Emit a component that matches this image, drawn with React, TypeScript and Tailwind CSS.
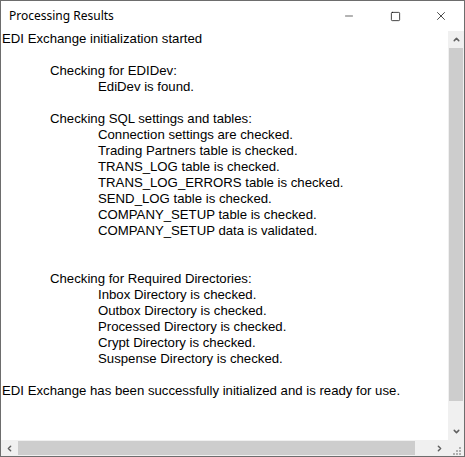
import { Minus, Square, X, ChevronUp, ChevronDown, ChevronLeft, ChevronRight } from 'lucide-react';

const lines: [number, string][] = [
  [0, 'EDI Exchange initialization started'],
  [0, ''],
  [1, 'Checking for EDIDev:'],
  [2, 'EdiDev is found.'],
  [0, ''],
  [1, 'Checking SQL settings and tables:'],
  [2, 'Connection settings are checked.'],
  [2, 'Trading Partners table is checked.'],
  [2, 'TRANS_LOG table is checked.'],
  [2, 'TRANS_LOG_ERRORS table is checked.'],
  [2, 'SEND_LOG table is checked.'],
  [2, 'COMPANY_SETUP table is checked.'],
  [2, 'COMPANY_SETUP data is validated.'],
  [0, ''],
  [0, ''],
  [1, 'Checking for Required Directories:'],
  [2, 'Inbox Directory is checked.'],
  [2, 'Outbox Directory is checked.'],
  [2, 'Processed Directory is checked.'],
  [2, 'Crypt Directory is checked.'],
  [2, 'Suspense Directory is checked.'],
  [0, ''],
  [0, 'EDI Exchange has been successfully initialized and is ready for use.'],
];

const indent = ['pl-[1px]', 'pl-[49px]', 'pl-[97px]'];

export default function App() {
  return (
    <div className="w-[465px] h-[457px] bg-white border border-[#6d6d6d] flex flex-col overflow-hidden">
      {/* Title bar */}
      <div className="h-[30px] flex items-center shrink-0">
        <span className="pl-[8px] flex-1 text-[12px] text-black font-['Noto_Sans',sans-serif]">Processing Results</span>
        <div className="flex h-full">
          <button className="w-[46px] h-full flex items-center justify-center">
            <Minus className="w-[12px] h-[12px] text-black" strokeWidth={1.2} />
          </button>
          <button className="w-[46px] h-full flex items-center justify-center">
            <Square className="w-[11px] h-[11px] text-black" strokeWidth={1.6} />
          </button>
          <button className="w-[46px] h-full flex items-center justify-center">
            <X className="w-[14px] h-[14px] text-black" strokeWidth={1.2} />
          </button>
        </div>
      </div>

      {/* Text area with scrollbars */}
      <div className="flex-1 flex flex-col min-h-0">
        <div className="flex-1 flex min-h-0">
          <div className="flex-1 font-['Liberation_Sans',Arial,sans-serif] text-[13.2px] leading-[16px] text-black whitespace-pre">
            {lines.map(([lvl, text], i) => (
              <div key={i} className={`h-[16px] ${indent[lvl]}`}>{text}</div>
            ))}
          </div>
          {/* Vertical scrollbar */}
          <div className="w-[16px] bg-[#f0f0f0] flex flex-col">
            <div className="h-[17px] flex items-center justify-center">
              <ChevronUp className="w-[9px] h-[9px] text-[#606060]" strokeWidth={4} />
            </div>
            <div className="h-[353px] mx-[1px] bg-[#cdcdcd]" />
            <div className="flex-1" />
            <div className="h-[17px] flex items-center justify-center">
              <ChevronDown className="w-[9px] h-[9px] text-[#606060]" strokeWidth={4} />
            </div>
          </div>
        </div>
        {/* Horizontal scrollbar */}
        <div className="h-[16px] flex bg-[#f0f0f0] shrink-0">
          <div className="w-[17px] flex items-center justify-center">
            <ChevronLeft className="w-[9px] h-[9px] text-[#606060]" strokeWidth={4} />
          </div>
          <div className="w-[397px] my-[1px] bg-[#cdcdcd]" />
          <div className="flex-1" />
          <div className="w-[17px] flex items-center justify-center">
            <ChevronRight className="w-[9px] h-[9px] text-[#606060]" strokeWidth={4} />
          </div>
          <div className="w-[16px] relative">
            <svg width="16" height="16" viewBox="0 0 16 16" className="absolute inset-0">
              <rect x="11" y="7" width="2" height="2" fill="#b0b0b0" />
              <rect x="8" y="10" width="2" height="2" fill="#b0b0b0" />
              <rect x="11" y="10" width="2" height="2" fill="#b0b0b0" />
              <rect x="5" y="13" width="2" height="2" fill="#b0b0b0" />
              <rect x="8" y="13" width="2" height="2" fill="#b0b0b0" />
              <rect x="11" y="13" width="2" height="2" fill="#b0b0b0" />
            </svg>
          </div>
        </div>
      </div>
    </div>
  );
}
